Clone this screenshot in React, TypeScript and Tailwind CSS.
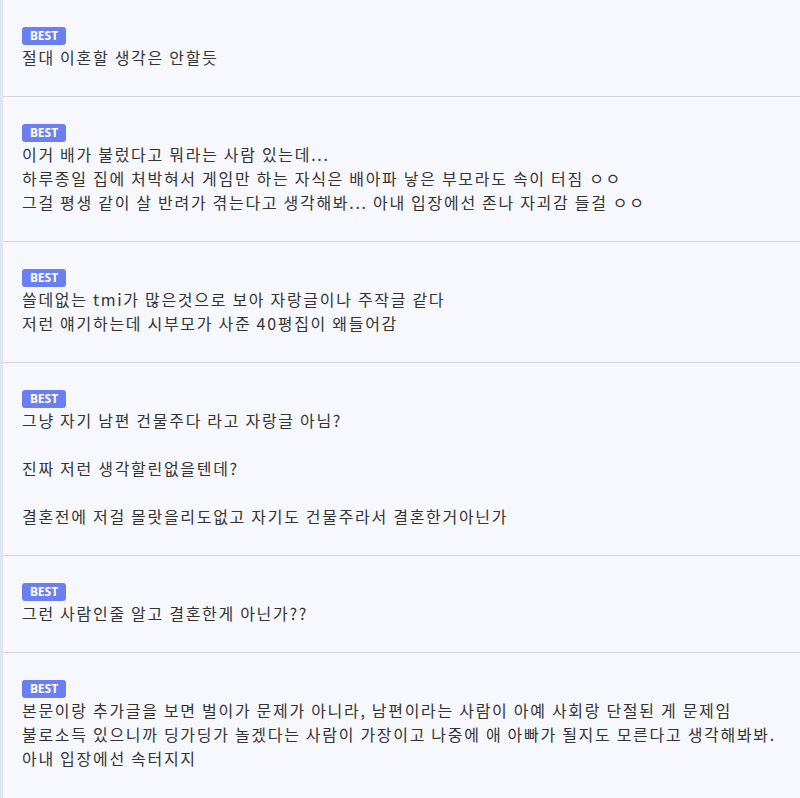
const comments: string[][] = [
  ["절대 이혼할 생각은 안할듯"],
  [
    "이거 배가 불렀다고 뭐라는 사람 있는데...",
    "하루종일 집에 처박혀서 게임만 하는 자식은 배아파 낳은 부모라도 속이 터짐 ㅇㅇ",
    "그걸 평생 같이 살 반려가 겪는다고 생각해봐... 아내 입장에선 존나 자괴감 들걸 ㅇㅇ",
  ],
  [
    "쓸데없는 tmi가 많은것으로 보아 자랑글이나 주작글 같다",
    "저런 얘기하는데 시부모가 사준 40평집이 왜들어감",
  ],
  [
    "그냥 자기 남편 건물주다 라고 자랑글 아님?",
    "",
    "진짜 저런 생각할린없을텐데?",
    "",
    "결혼전에 저걸 몰랏을리도없고 자기도 건물주라서 결혼한거아닌가",
  ],
  ["그런 사람인줄 알고 결혼한게 아닌가??"],
  [
    "본문이랑 추가글을 보면 벌이가 문제가 아니라, 남편이라는 사람이 아예 사회랑 단절된 게 문제임",
    "불로소득 있으니까 딩가딩가 놀겠다는 사람이 가장이고 나중에 애 아빠가 될지도 모른다고 생각해봐봐.",
    "아내 입장에선 속터지지",
  ],
];

function Badge() {
  return (
    <div className="flex h-[18px] w-[44px] items-center justify-center rounded-[3px] bg-[#6b7ff0] text-[12px] font-bold leading-none text-white font-['Noto_Sans',sans-serif]">
      BEST
    </div>
  );
}

export default function App() {
  return (
    <div className="min-h-[798px] w-[800px] overflow-hidden bg-[#f6f8fd] border-l-[3px] border-[#dfe5f5]">
      {comments.map((lines, i) => (
        <div
          key={i}
          className="border-b border-[#d4d6da] pl-[19px] pr-2 pt-[27px] pb-[27px] last:border-b-0"
        >
          <Badge />
          <div className="text-[16px] leading-[24px] tracking-[1.7px] text-[#333333] font-['Noto_Sans_CJK_KR',sans-serif] whitespace-nowrap">
            {lines.map((line, j) => (
              <p key={j} className="h-[24px]">
                {line}
              </p>
            ))}
          </div>
        </div>
      ))}
    </div>
  );
}
